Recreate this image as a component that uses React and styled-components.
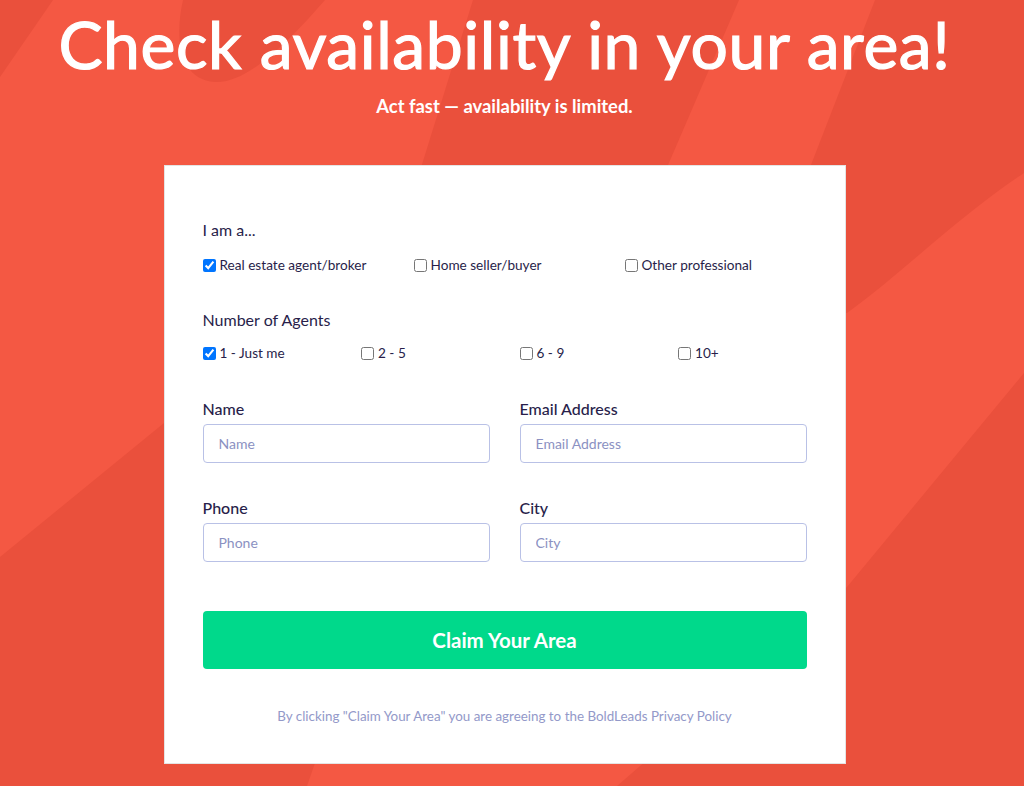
import React from "react";
import styled, { createGlobalStyle } from "styled-components";

const GlobalStyle = createGlobalStyle`
  html, body {
    margin: 0;
    padding: 0;
    height: 100%;
    overflow: hidden;
  }
  body {
    background: #f45843;
    font-family: "Lato", "Noto Sans", sans-serif;
  }
`;

const Page = styled.div`
  position: relative;
  min-height: 786px;
  background: #f45843;
  overflow: hidden;
`;

const Backdrop = styled.svg`
  position: absolute;
  inset: 0;
  width: 1024px;
  height: 786px;
  z-index: 0;
`;

const Content = styled.main`
  position: relative;
  z-index: 1;
  width: 1009px;
  display: flex;
  flex-direction: column;
  align-items: center;
`;

const Title = styled.h1`
  margin: 4px 0 0;
  font-size: 66px;
  line-height: 80px;
  font-weight: 400;
  color: #fff;
  letter-spacing: 0.6px;
  -webkit-text-stroke: 1.2px #fff;
`;

const Subtitle = styled.p`
  margin: 12px 0 0;
  font-size: 18.4px;
  line-height: 20px;
  font-weight: 700;
  color: #fff;
`;

const Card = styled.form`
  margin-top: 49px;
  width: 682px;
  box-sizing: border-box;
  padding: 54px 38px 39px;
  background: #fff;
  border: 1px solid #e4e4e4;
  color: #281e4a;
`;

const GroupLabel = styled.div`
  font-size: 16px;
  line-height: 19px;
  font-weight: 400;
  color: #281e4a;
`;

const OptionRow = styled.div`
  display: grid;
  grid-template-columns: repeat(${(p) => p.$cols}, ${(p) => p.$width}px);
  margin: ${(p) => p.$top}px 0 0;
  & + ${GroupLabel} {
    margin-top: 37px;
  }
`;

const Option = styled.label`
  display: flex;
  align-items: center;
  gap: 4px;
  font-size: 13.6px;
  line-height: 16px;
  color: #281e4a;

  input {
    margin: 0;
    width: 13px;
    height: 13px;
  }
`;

const Fields = styled.div`
  display: grid;
  grid-template-columns: 1fr 1fr;
  column-gap: 30px;
  row-gap: 35px;
  margin-top: 38px;
`;

const Field = styled.div`
  display: flex;
  flex-direction: column;
  gap: 6px;
`;

const FieldLabel = styled.label`
  font-size: 16px;
  line-height: 19px;
  font-weight: 500;
  color: #281e4a;
`;

const Input = styled.input`
  box-sizing: border-box;
  height: 39px;
  padding: 0 15px;
  border: 1px solid #b9c1e6;
  border-radius: 4px;
  font-family: inherit;
  font-size: 14px;
  color: #281e4a;
  outline: none;

  &::placeholder {
    color: #8b91c2;
  }
`;

const Submit = styled.button`
  display: block;
  width: 100%;
  height: 58px;
  margin-top: 49px;
  border: 0;
  border-radius: 4px;
  background: #00d98b;
  color: #fff;
  font-family: inherit;
  font-size: 20.5px;
  font-weight: 700;
  cursor: pointer;
`;

const Note = styled.p`
  margin: 39px 0 0;
  text-align: center;
  font-size: 13.4px;
  line-height: 16px;
  color: #9399c9;
`;

const roles = [
  { label: "Real estate agent/broker", checked: true },
  { label: "Home seller/buyer" },
  { label: "Other professional" },
];

const agents = [
  { label: "1 - Just me", checked: true },
  { label: "2 - 5" },
  { label: "6 - 9" },
  { label: "10+" },
];

const fields = ["Name", "Email Address", "Phone", "City"];

function Background() {
  const dark = "#ea503c";
  return (
    <Backdrop viewBox="0 0 1024 786" aria-hidden="true">
      <path d="M0 0 L53 0 L0 77 Z" fill={dark} />
      <path d="M183 0 C174 40 180 80 215 82 C248 84 290 40 325 0 Z" fill={dark} />
      <path d="M473 0 L739 0 L610 300 L380 300 Z" fill={dark} />
      <path d="M875 0 L1024 0 L1024 173 C960 215 900 275 847 313 L790 300 L809 170 Z" fill={dark} />
      <path d="M0 557 L164 423 L340 290 L315 763 L307 786 L0 786 Z" fill={dark} />
      <path d="M1024 373 L847 587 L617 786 L1024 786 Z" fill={dark} />
    </Backdrop>
  );
}

export default function App() {
  return (
    <>
      <GlobalStyle />
      <Page>
        <Background />
        <Content>
          <Title>Check availability in your area!</Title>
          <Subtitle>Act fast — availability is limited.</Subtitle>
          <Card onSubmit={(e) => e.preventDefault()}>
            <GroupLabel>I am a...</GroupLabel>
            <OptionRow $cols={3} $width={211} $top={18}>
              {roles.map((r) => (
                <Option key={r.label}>
                  <input type="checkbox" defaultChecked={r.checked} />
                  {r.label}
                </Option>
              ))}
            </OptionRow>
            <GroupLabel>Number of Agents</GroupLabel>
            <OptionRow $cols={4} $width={158.5} $top={16}>
              {agents.map((a) => (
                <Option key={a.label}>
                  <input type="checkbox" defaultChecked={a.checked} />
                  {a.label}
                </Option>
              ))}
            </OptionRow>
            <Fields>
              {fields.map((f) => (
                <Field key={f}>
                  <FieldLabel>{f}</FieldLabel>
                  <Input placeholder={f} />
                </Field>
              ))}
            </Fields>
            <Submit type="submit">Claim Your Area</Submit>
            <Note>By clicking "Claim Your Area" you are agreeing to the BoldLeads Privacy Policy</Note>
          </Card>
        </Content>
      </Page>
    </>
  );
}
